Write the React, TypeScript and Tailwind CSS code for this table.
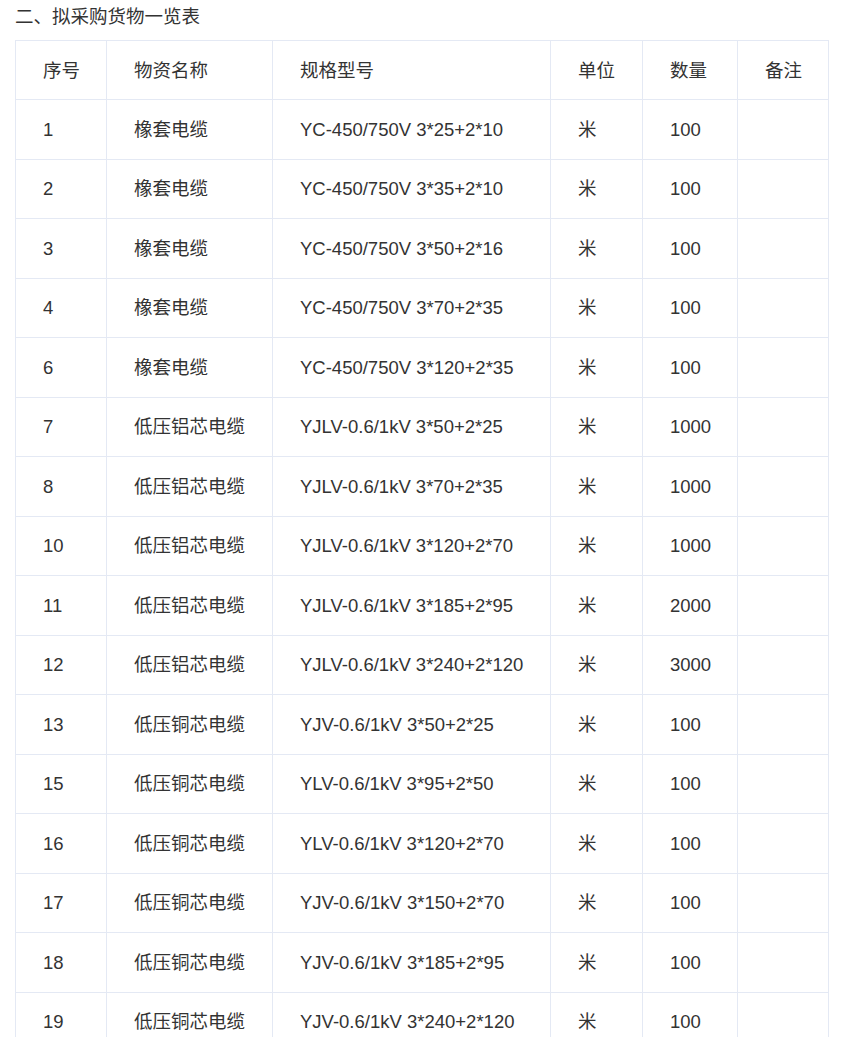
const rows: [string, string, string, string, string][] = [
  ['1', '橡套电缆', 'YC-450/750V 3*25+2*10', '米', '100'],
  ['2', '橡套电缆', 'YC-450/750V 3*35+2*10', '米', '100'],
  ['3', '橡套电缆', 'YC-450/750V 3*50+2*16', '米', '100'],
  ['4', '橡套电缆', 'YC-450/750V 3*70+2*35', '米', '100'],
  ['6', '橡套电缆', 'YC-450/750V 3*120+2*35', '米', '100'],
  ['7', '低压铝芯电缆', 'YJLV-0.6/1kV 3*50+2*25', '米', '1000'],
  ['8', '低压铝芯电缆', 'YJLV-0.6/1kV 3*70+2*35', '米', '1000'],
  ['10', '低压铝芯电缆', 'YJLV-0.6/1kV 3*120+2*70', '米', '1000'],
  ['11', '低压铝芯电缆', 'YJLV-0.6/1kV 3*185+2*95', '米', '2000'],
  ['12', '低压铝芯电缆', 'YJLV-0.6/1kV 3*240+2*120', '米', '3000'],
  ['13', '低压铜芯电缆', 'YJV-0.6/1kV 3*50+2*25', '米', '100'],
  ['15', '低压铜芯电缆', 'YLV-0.6/1kV 3*95+2*50', '米', '100'],
  ['16', '低压铜芯电缆', 'YLV-0.6/1kV 3*120+2*70', '米', '100'],
  ['17', '低压铜芯电缆', 'YJV-0.6/1kV 3*150+2*70', '米', '100'],
  ['18', '低压铜芯电缆', 'YJV-0.6/1kV 3*185+2*95', '米', '100'],
  ['19', '低压铜芯电缆', 'YJV-0.6/1kV 3*240+2*120', '米', '100'],
]

const headers = ['序号', '物资名称', '规格型号', '单位', '数量', '备注']
const widths = ['w-[91px]', 'w-[166px]', 'w-[278px]', 'w-[92px]', 'w-[95px]', 'w-[91px]']

export default function App() {
  return (
    <div
      className="min-h-screen bg-white px-[15px] text-[18.5px] text-[#333]"
      style={{ fontFamily: '"Liberation Sans", "Noto Sans CJK SC", sans-serif' }}
    >
      <div className="h-[34px] leading-[34px]">二、拟采购货物一览表</div>
      <table className="mt-[6px] w-[813px] table-fixed border-collapse">
        <colgroup>
          {widths.map((w, i) => (
            <col key={i} className={w} />
          ))}
        </colgroup>
        <thead>
          <tr className="h-[59px]">
            {headers.map((h) => (
              <th key={h} className="border border-[#e4e9f4] pt-[1px] pl-[27px] text-left font-normal">
                {h}
              </th>
            ))}
          </tr>
        </thead>
        <tbody>
          {rows.map((r) => (
            <tr key={r[0]} className="h-[59.5px]">
              {r.map((c, i) => (
                <td key={i} className="border border-[#e4e9f4] pt-[1px] pl-[27px] whitespace-nowrap">
                  {c}
                </td>
              ))}
              <td className="border border-[#e4e9f4]" />
            </tr>
          ))}
        </tbody>
      </table>
    </div>
  )
}
